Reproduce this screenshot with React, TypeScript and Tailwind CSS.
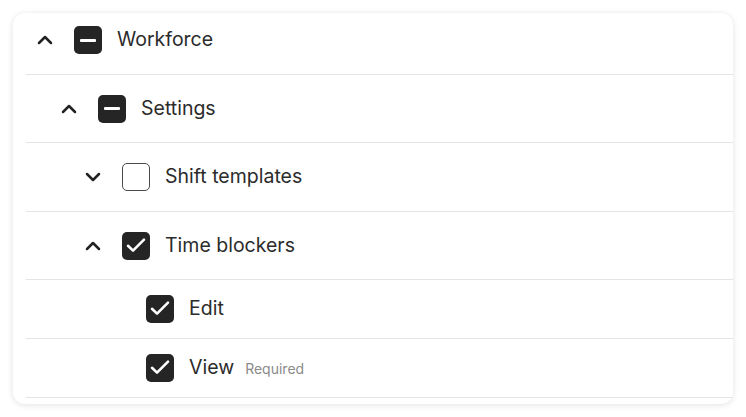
import React from "react";

type State = "checked" | "unchecked" | "indeterminate";
type Row = {
  label: string;
  level: number;
  chevron?: "up" | "down";
  state: State;
  note?: string;
  h: string;
};

const rows: Row[] = [
  { label: "Workforce", level: 0, chevron: "up", state: "indeterminate", h: "h-[62px] pb-[7px]" },
  { label: "Settings", level: 1, chevron: "up", state: "indeterminate", h: "h-[68px]" },
  { label: "Shift templates", level: 2, chevron: "down", state: "unchecked", h: "h-[69px]" },
  { label: "Time blockers", level: 2, chevron: "up", state: "checked", h: "h-[68px]" },
  { label: "Edit", level: 3, state: "checked", h: "h-[59px]" },
  { label: "View", level: 3, state: "checked", note: "Required", h: "h-[59px]" },
];

const padByLevel = ["pl-[7px]", "pl-[31px]", "pl-[55px]", "pl-[79px]"];

function Chevron({ dir }: { dir: "up" | "down" }) {
  return (
    <svg width="24" height="24" viewBox="0 0 24 24" fill="none" stroke="#222" strokeWidth="2.5" strokeLinecap="round" strokeLinejoin="round">
      {dir === "up" ? <path d="m18 15-6-6-6 6" /> : <path d="m6 9 6 6 6-6" />}
    </svg>
  );
}

function Box({ state }: { state: State }) {
  if (state === "unchecked") {
    return <div className="w-[28px] h-[28px] rounded-[5px] border-[1.5px] border-[#4a4a4a] bg-white" />;
  }
  return (
    <div className="w-[28px] h-[28px] rounded-[5px] bg-[#252525] flex items-center justify-center">
      {state === "indeterminate" ? (
        <div className="w-[16px] h-[3px] rounded-[1px] bg-white" />
      ) : (
        <svg width="28" height="28" viewBox="0 0 28 28" fill="none" stroke="white" strokeWidth="2.6" strokeLinecap="round" strokeLinejoin="round">
          <path d="M6 13.8 11 18.6 22 7.6" />
        </svg>
      )}
    </div>
  );
}

export default function App() {
  return (
    <div className="min-h-screen bg-white p-[13px]" style={{ fontFamily: "Inter, 'Noto Sans', sans-serif" }}>
      <div className="w-[720px] h-[391px] rounded-[12px] bg-white shadow-[0_1px_6px_rgba(0,0,0,0.12)] overflow-hidden">
        {rows.map((r, i) => (
          <div key={i} className={`ml-[13px] border-b-[1.5px] border-[#e4e4e4] flex items-center ${r.h} ${padByLevel[r.level]}`}>
            <div className="w-[24px] h-[24px] flex items-center justify-center">
              {r.chevron ? <Chevron dir={r.chevron} /> : null}
            </div>
            <div className="ml-[17px]">
              <Box state={r.state} />
            </div>
            <div className="ml-[15px] flex items-baseline gap-[11px]">
              <span className="text-[19.5px] text-[#2b2b2b] leading-none">{r.label}</span>
              {r.note ? <span className="text-[14px] text-[#8a8a8a] leading-none">{r.note}</span> : null}
            </div>
          </div>
        ))}
      </div>
    </div>
  );
}
